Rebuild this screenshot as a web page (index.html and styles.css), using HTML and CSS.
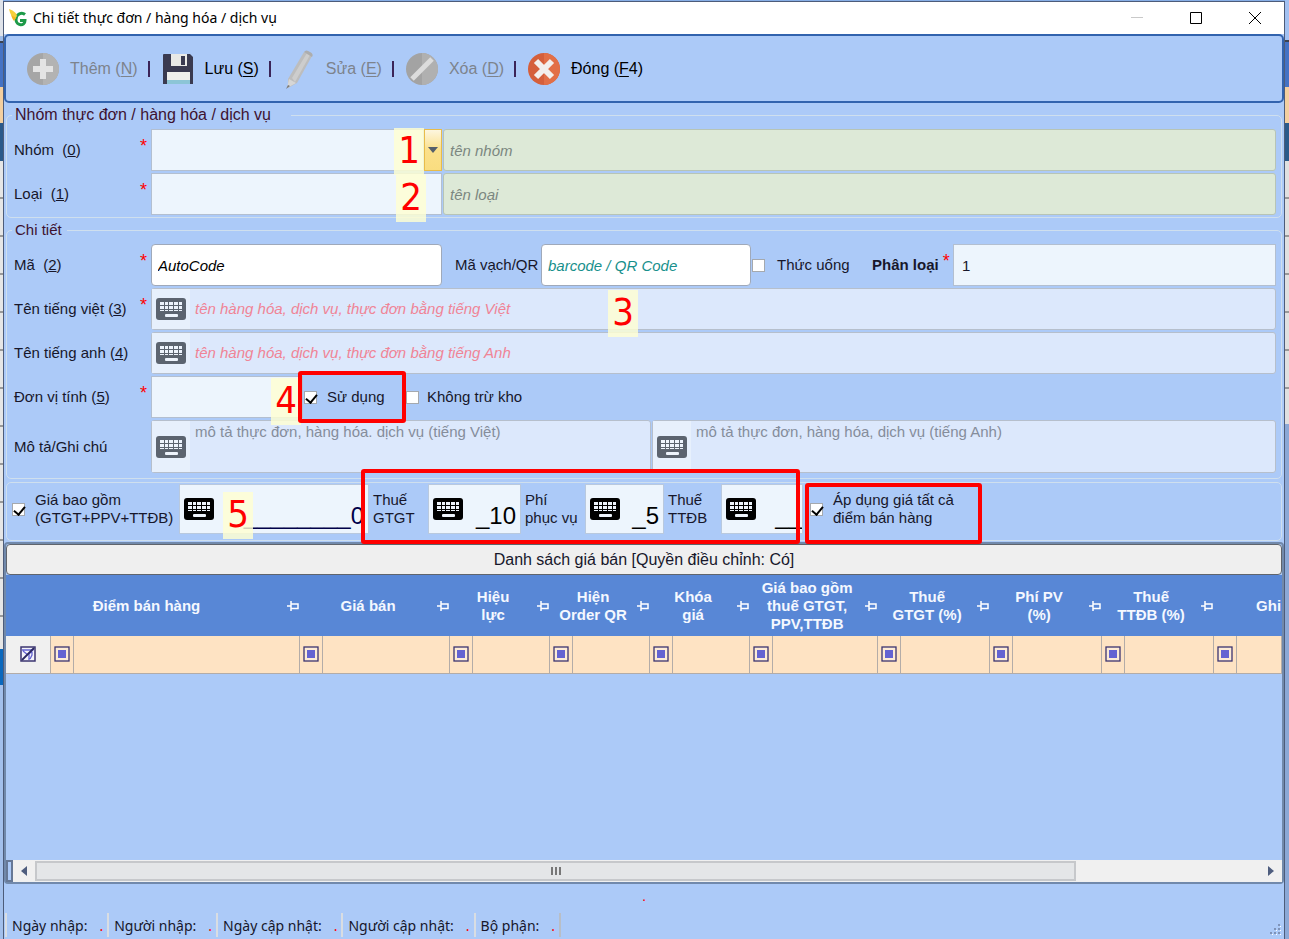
FILE: index.html
```html
<!DOCTYPE html>
<html lang="vi">
<head>
<meta charset="utf-8">
<title>Chi tiết thực đơn / hàng hóa / dịch vụ</title>
<meta name="viewport" content="width=device-width, initial-scale=1">
<link rel="stylesheet" href="styles.css">
</head>
<body class="desktop">
<svg class="defs" aria-hidden="true">
  <symbol id="kb" viewBox="0 0 32 24">
    <rect x="1" y="1" width="30" height="22" rx="3" fill="currentColor"/>
    <path d="M5 5h4v3h-4zM10 5h3v3h-3zM14 5h4v3h-4zM19 5h4v3h-4zM24 5h3v3h-3zM5 9h4v3h-4zM10 9h3v3h-3zM14 9h4v3h-4zM19 9h4v3h-4zM24 9h3v3h-3zM5 13h4v1h-4zM10 13h3v1h-3zM14 13h4v1h-4zM19 13h4v1h-4zM24 13h3v1h-3z" fill="#eef4fc"/>
    <rect x="10" y="17" width="13" height="3" rx="1" fill="#eef4fc"/>
  </symbol>
  <symbol id="pin" viewBox="0 0 12 10">
    <path d="M0 5h4M4 0v10M4 3h7v4.500h-7" fill="none" stroke="#fff" stroke-width="1.500"/>
  </symbol>
  <symbol id="flt" viewBox="0 0 16 16">
    <rect x="1" y="1" width="14" height="14" fill="#fdebd6" stroke="#3b3470" stroke-width="1.300"/>
    <rect x="4" y="4" width="8" height="8" fill="#6463d2"/>
  </symbol>
</svg>
<main class="window">
  <header class="titlebar">
    <svg class="app-icon" viewBox="0 0 18 18" aria-hidden="true">
      <path d="M16 5.500C13 3 7 4.500 7 10.500C7 17 16 17.500 16 11.500H11" fill="none" stroke="#1d9a48" stroke-width="3"/>
      <path d="M0 0C3 1 7 3 8 7L6 10C3 8 1 5 0 0Z" fill="#f7cf3b"/>
      <path d="M2 6L7 9L5 12C4 11 3 9 2 6Z" fill="#f3b61f"/>
    </svg>
    <h1 class="title">Chi tiết thực đơn / hàng hóa / dịch vụ</h1>
    <div class="caption-buttons">
      <button type="button" class="cap" disabled aria-label="Thu nhỏ"><svg viewBox="0 0 14 14"><path d="M1 6.500h12" stroke="#c9c9c9" fill="none"/></svg></button>
      <button type="button" class="cap" aria-label="Phóng to"><svg viewBox="0 0 14 14"><path d="M1.500 1.500h11v11h-11z" stroke="#000" fill="none"/></svg></button>
      <button type="button" class="cap" aria-label="Đóng cửa sổ"><svg viewBox="0 0 14 14"><path d="M1 1l12 12M13 1l-12 12" stroke="#000" fill="none"/></svg></button>
    </div>
  </header>

  <nav class="toolbar">
    <button type="button" class="tool" disabled>
      <svg viewBox="0 0 34 34" aria-hidden="true"><circle cx="17" cy="17" r="16" fill="#a6a6a6"/><path d="M17 1a16 16 0 0 1 0 32z" fill="#b3b3b3"/><path d="M14 7h6v7h7v6h-7v7h-6v-7h-7v-6h7z" fill="#e4e4e4"/></svg>
      <span>Thêm (<u>N</u>)</span></button>
    <span class="bar"></span>
    <button type="button" class="tool">
      <svg viewBox="0 0 34 34" aria-hidden="true"><path d="M2 3q0-1 1-1h26l3 3v27h-30z" fill="#3a3a50"/><path d="M10 2h16v12h-16z" fill="#e9e9e6"/><path d="M20 4h4v9h-4z" fill="#3a3a50"/><path d="M6 20h23v12h-23z" fill="#efefec"/><path d="M6 28h23v4h-23z" fill="#8cc5d6"/></svg>
      <span>Lưu (<u>S</u>)</span></button>
    <span class="bar"></span>
    <button type="button" class="tool" disabled>
      <svg class="pencil" viewBox="0 0 34 40" aria-hidden="true"><path d="M6 30L22 3l8 4-15 27-9 5z" fill="#bdbdbd"/><path d="M10 29L25 4l3 2-15 27z" fill="#cdcdcd"/><path d="M22 3q2-3 6 0q4 2 2 5z" fill="#adadad"/><path d="M7 30l7 4-9 5z" fill="#d6d6d6"/><path d="M6 36l2 1-4 3z" fill="#777"/></svg>
      <span>Sửa (<u>E</u>)</span></button>
    <span class="bar"></span>
    <button type="button" class="tool" disabled>
      <svg viewBox="0 0 34 34" aria-hidden="true"><circle cx="17" cy="17" r="16" fill="#a3a3a3"/><path d="M17 1a16 16 0 0 1 0 32z" fill="#b0b0b0"/><path d="M7 27L27 7" stroke="#dcdcdc" stroke-width="5"/></svg>
      <span>Xóa (<u>D</u>)</span></button>
    <span class="bar"></span>
    <button type="button" class="tool">
      <svg viewBox="0 0 34 34" aria-hidden="true"><circle cx="17" cy="17" r="16" fill="#d55f3b"/><path d="M17 1a16 16 0 0 1 0 32z" fill="#e26f47"/><path d="M9 9l16 16M25 9L9 25" stroke="#f3efec" stroke-width="6"/></svg>
      <span>Đóng (<u>F</u>4)</span></button>
  </nav>

  <form class="form">
    <fieldset class="group">
      <legend class="legend wide">Nhóm thực đơn / hàng hóa / dịch vụ</legend>
      <div class="row">
        <label class="label" for="nhom"><span>Nhóm &nbsp;(<u>0</u>)</span><b class="req">*</b></label>
        <div class="combo"><input id="nhom" class="box pale" type="text"><button type="button" class="drop" aria-label="Mở danh sách"><svg viewBox="0 0 10 6"><path d="M0 0h10L5 6z" fill="#555f6b"/></svg></button></div>
        <input class="box green grow" type="text" placeholder="tên nhóm" aria-label="Tên nhóm" readonly>
      </div>
      <div class="row">
        <label class="label" for="loai"><span>Loại &nbsp;(<u>1</u>)</span><b class="req">*</b></label>
        <div class="combo"><input id="loai" class="box pale" type="text"></div>
        <input class="box green grow" type="text" placeholder="tên loại" aria-label="Tên loại" readonly>
      </div>
    </fieldset>

    <fieldset class="group">
      <legend class="legend">Chi tiết</legend>
      <div class="row">
        <label class="label" for="ma"><span>Mã &nbsp;(<u>2</u>)</span><b class="req">*</b></label>
        <div class="combo"><input id="ma" class="box white code" type="text" value="AutoCode"></div>
        <label class="qr-label" for="qr">Mã vạch/QR</label>
        <input id="qr" class="box white barcode" type="text" placeholder="barcode / QR Code">
        <label class="check drink"><input type="checkbox" class="tick">Thức uống</label>
        <label class="kind" for="phanloai">Phân loại<b class="req">*</b></label>
        <input id="phanloai" class="box pale grow" type="text" value="1">
      </div>
      <div class="row">
        <label class="label" for="tenviet"><span>Tên tiếng việt (<u>3</u>)</span><b class="req">*</b></label>
        <div class="box soft grow keyed"><button type="button" class="key" aria-label="Bàn phím"><svg><use href="#kb"/></svg></button><input id="tenviet" class="plain pink" type="text" placeholder="tên hàng hóa, dịch vụ, thực đơn bằng tiếng Việt"></div>
      </div>
      <div class="row">
        <label class="label" for="tenanh"><span>Tên tiếng anh (<u>4</u>)</span></label>
        <div class="box soft grow keyed"><button type="button" class="key" aria-label="Bàn phím"><svg><use href="#kb"/></svg></button><input id="tenanh" class="plain pink" type="text" placeholder="tên hàng hóa, dịch vụ, thực đơn bằng tiếng Anh"></div>
      </div>
      <div class="row">
        <label class="label" for="donvi"><span>Đơn vị tính (<u>5</u>)</span><b class="req">*</b></label>
        <input id="donvi" class="box pale unit" type="text">
        <label class="check use"><input type="checkbox" class="tick" checked>Sử dụng</label>
        <label class="check stock"><input type="checkbox" class="tick">Không trừ kho</label>
      </div>
      <div class="row tall">
        <label class="label" for="motaviet"><span>Mô tả/Ghi chú</span></label>
        <div class="box soft keyed note-viet"><button type="button" class="key" aria-label="Bàn phím"><svg><use href="#kb"/></svg></button><textarea id="motaviet" class="plain" placeholder="mô tả thực đơn, hàng hóa. dịch vụ (tiếng Việt)"></textarea></div>
        <div class="box soft keyed grow"><button type="button" class="key" aria-label="Bàn phím"><svg><use href="#kb"/></svg></button><textarea class="plain" aria-label="Mô tả tiếng Anh" placeholder="mô tả thực đơn, hàng hóa, dịch vụ (tiếng Anh)"></textarea></div>
      </div>
    </fieldset>

    <div class="prices">
      <label class="check include"><input type="checkbox" class="tick" checked><span>Giá bao gồm<br>(GTGT+PPV+TTĐB)</span></label>
      <div class="amount price"><button type="button" class="key dark" aria-label="Bàn phím"><svg><use href="#kb"/></svg></button><input class="num" type="text" value="________0" aria-label="Giá"></div>
      <label class="tax t-gtgt" for="gtgt">Thuế<br>GTGT</label>
      <div class="amount a-gtgt"><button type="button" class="key dark" aria-label="Bàn phím"><svg><use href="#kb"/></svg></button><input id="gtgt" class="num" type="text" value="_10"></div>
      <label class="tax t-pv" for="pv">Phí<br>phục vụ</label>
      <div class="amount a-pv"><button type="button" class="key dark" aria-label="Bàn phím"><svg><use href="#kb"/></svg></button><input id="pv" class="num" type="text" value="_5"></div>
      <label class="tax t-ttdb" for="ttdb">Thuế<br>TTĐB</label>
      <div class="amount a-ttdb"><button type="button" class="key dark" aria-label="Bàn phím"><svg><use href="#kb"/></svg></button><input id="ttdb" class="num" type="text" value="__"></div>
      <label class="check apply"><input type="checkbox" class="tick" checked><span>Áp dụng giá tất cả<br>điểm bán hàng</span></label>
    </div>
  </form>

  <section class="list">
    <h2 class="list-title">Danh sách giá bán [Quyền điều chỉnh: Có]</h2>
    <div class="grid-wrap">
    <table class="grid">
      <colgroup><col class="c-mark"><col class="c-i"><col class="c-place"><col class="c-i"><col class="c-price"><col class="c-i"><col class="c-s"><col class="c-i"><col class="c-s"><col class="c-i"><col class="c-s"><col class="c-i"><col class="c-l"><col class="c-i"><col class="c-m"><col class="c-i"><col class="c-m"><col class="c-i"><col class="c-m"><col class="c-i"><col></colgroup>
      <thead><tr>
        <th colspan="3"><div class="th"><span>Điểm bán hàng</span><svg><use href="#pin"/></svg></div></th>
        <th colspan="2"><div class="th"><span>Giá bán</span><svg><use href="#pin"/></svg></div></th>
        <th colspan="2"><div class="th"><span>Hiệu<br>lực</span><svg><use href="#pin"/></svg></div></th>
        <th colspan="2"><div class="th"><span>Hiện<br>Order QR</span><svg><use href="#pin"/></svg></div></th>
        <th colspan="2"><div class="th"><span>Khóa<br>giá</span><svg><use href="#pin"/></svg></div></th>
        <th colspan="2"><div class="th"><span>Giá bao gồm<br>thuế GTGT,<br>PPV,TTĐB</span><svg><use href="#pin"/></svg></div></th>
        <th colspan="2"><div class="th"><span>Thuế<br>GTGT (%)</span><svg><use href="#pin"/></svg></div></th>
        <th colspan="2"><div class="th"><span>Phí PV<br>(%)</span><svg><use href="#pin"/></svg></div></th>
        <th colspan="2"><div class="th"><span>Thuế<br>TTĐB (%)</span><svg><use href="#pin"/></svg></div></th>
        <th colspan="2" class="last">Ghi</th>
      </tr></thead>
      <tbody><tr>
        <td class="mark"><svg viewBox="0 0 16 16"><rect x="1" y="1" width="14" height="14" fill="#f4f4fa" stroke="#3b3470" stroke-width="1.500"/><path d="M2 4h11L9 8v6M3 5l5 4M12 6v3l-2 4" fill="none" stroke="#6463d2" stroke-width="1.300"/><path d="M2 14L14 2" stroke="#2b2860" stroke-width="1.800"/></svg></td>
        <td><svg><use href="#flt"/></svg></td><td></td>
        <td><svg><use href="#flt"/></svg></td><td></td>
        <td><svg><use href="#flt"/></svg></td><td></td>
        <td><svg><use href="#flt"/></svg></td><td></td>
        <td><svg><use href="#flt"/></svg></td><td></td>
        <td><svg><use href="#flt"/></svg></td><td></td>
        <td><svg><use href="#flt"/></svg></td><td></td>
        <td><svg><use href="#flt"/></svg></td><td></td>
        <td><svg><use href="#flt"/></svg></td><td></td>
        <td><svg><use href="#flt"/></svg></td><td></td>
      </tr></tbody>
    </table>
    </div>
    <div class="scroll">
      <span class="split"></span>
      <button type="button" class="arrow" aria-label="Cuộn trái"><svg viewBox="0 0 6 10"><path d="M6 0v10L0 5z" fill="#4e5d7e"/></svg></button>
      <div class="track"><div class="thumb"><i></i><i></i><i></i></div></div>
      <button type="button" class="arrow" aria-label="Cuộn phải"><svg viewBox="0 0 6 10"><path d="M0 0v10L6 5z" fill="#4e5d7e"/></svg></button>
    </div>
  </section>

  <p class="message">.</p>
  <footer class="status">
    <div class="item">Ngày nhập:<b>.</b></div>
    <div class="item">Người nhập:<b>.</b></div>
    <div class="item">Ngày cập nhật:<b>.</b></div>
    <div class="item">Người cập nhật:<b>.</b></div>
    <div class="item">Bộ phận:<b>.</b></div>
    <svg class="grip" viewBox="0 0 14 14" aria-hidden="true"><path d="M10 1h2v2h-2zM6 5h2v2h-2zM10 5h2v2h-2zM2 9h2v2h-2zM6 9h2v2h-2zM10 9h2v2h-2z" fill="#7f93b8"/><path d="M12 3h1v1h-1zM8 7h1v1h-1zM12 7h1v1h-1zM4 11h1v1h-1zM8 11h1v1h-1zM12 11h1v1h-1z" fill="#fff"/></svg>
  </footer>

  <span class="step s1">1</span>
  <span class="step s2">2</span>
  <span class="step s3">3</span>
  <span class="step s4">4</span>
  <span class="step s5">5</span>
  <span class="frame f-use"></span>
  <span class="frame f-tax"></span>
  <span class="frame f-apply"></span>
</main>
</body>
</html>
```
FILE: styles.css
```css
* { box-sizing: border-box; }

.desktop {
  margin: 0;
  min-height: 100vh;
  display: flex;
  padding: 1px 4px 0 3px;
  font: 15px/18px "Liberation Sans", Arial, sans-serif;
  color: #17172b;
  background:
    linear-gradient(#dfe3ea 0 36px, #9dbbe8 36px 41px, #3c4350 41px 43px, #4472c4 43px 87px, #f3cfa0 87px 123px, #2b5a8a 123px 161px, transparent 161px) 0 0 / 3px 100% no-repeat,
    linear-gradient(transparent 649px, #0a68be 649px 685px, #a3c0ec 685px) 0 0 / 3px 100% no-repeat,
    repeating-linear-gradient(#e6e6e6 0 36px, #999 36px 38px) 0 161px / 3px 100% no-repeat,
    linear-gradient(#a2c1f2 0 40px, #3c4350 40px 42px, #4472c4 42px 87px, #f3cfa0 87px 123px, #2b5a8a 123px 161px, transparent 161px 424px, #8ba8d6 424px) 100% 0 / 4px 100% no-repeat,
    repeating-linear-gradient(#e0e0e0 0 36px, #999 36px 38px) 100% 161px / 4px 100% no-repeat,
    #86aee6;
}
.defs { position: absolute; width: 0; height: 0; }

.window {
  position: relative;
  flex: 1;
  min-width: 0;
  display: flex;
  flex-direction: column;
  border: 1px solid #4d5c7a;
  border-bottom: 0;
  background: #accaf8;
}
button, input, textarea { font: inherit; color: inherit; margin: 0; }
button { border: 0; padding: 0; background: none; }

.titlebar {
  height: 32px;
  display: flex;
  align-items: center;
  padding-left: 5px;
  background: #fff;
}
.app-icon { width: 18px; height: 18px; margin-right: 6px; }
.title { margin: 0; font: 14px/20px "Noto Sans", "Open Sans", sans-serif; color: #000; }
.caption-buttons { display: flex; margin-left: auto; }
.cap { width: 59px; height: 32px; }
.cap svg { width: 14px; height: 14px; display: block; margin: auto; }

.toolbar {
  height: 69px;
  display: flex;
  align-items: center;
  padding-left: 20px;
  font-size: 16px;
  border: 2px solid #3263ae;
  border-radius: 5px;
}
.tool { display: flex; align-items: center; gap: 10px; color: #000; }
.tool:disabled { color: #7d838c; }
.tool svg { width: 34px; height: 34px; }
.tool .pencil { height: 40px; }
.tool u { text-underline-offset: 2px; }
.bar { width: 2px; height: 16px; margin: 0 11px 0 10px; background: #3b2458; }

.group {
  min-width: 0;
  display: flex;
  flex-direction: column;
  gap: 2px;
  margin: 3px 2px 0;
  padding: 5px 5px 2px 7px;
  border: 1px solid #cfdfee;
  border-radius: 5px;
}
.group + .group { padding-bottom: 5px; }
.legend { margin-left: -2px; padding: 0 5px 0 3px; line-height: 18px; color: #3d1230; }
.wide { padding-right: 20px; font-size: 16px; }

.row { display: flex; align-items: stretch; gap: 1px; height: 42px; }
.tall { height: 53px; }
.label {
  width: 136px;
  flex: none;
  display: flex;
  align-items: center;
  justify-content: space-between;
  padding-right: 3px;
}
.req { align-self: flex-start; padding-top: 8px; font-weight: 400; font-size: 18px; color: #f00; }
.grow { flex: 1; min-width: 0; }
.box { border: 1px solid #b3bfd0; padding: 0 8px; height: 100%; width: 100%; outline: 0; }
.row > .box.grow { width: auto; }
.pale { background: #edf5fd; }
.green { background: #dde9d7; border-color: #b7c4b6; border-radius: 3px; font-style: italic; padding: 0 6px; }
.white { background: #fff; border-color: #9fa9ba; border-radius: 4px; font-style: italic; padding: 0 6px; }
.soft { background: #dce8fc; border-color: #b6bfcc; border-radius: 3px; }
.code { color: #000; }
.combo { width: 291px; flex: none; display: flex; }
.drop {
  width: 18px;
  flex: none;
  border: 1px solid #e8bc4a;
  background: linear-gradient(#fdf6df, #fbe08a 50%, #f9dd80);
}
.drop svg { width: 10px; height: 6px; display: block; margin: auto; }
::placeholder { color: #7b8780; opacity: 1; }
.barcode::placeholder { color: #17908c; }
.pink::placeholder { color: #f08496; }
textarea::placeholder { color: #858d9b; }

.qr-label { width: 97px; flex: none; align-self: center; padding-left: 12px; white-space: nowrap; }
.row > .barcode { width: 210px; flex: none; }
.check { display: flex; align-items: center; gap: 10px; white-space: nowrap; }
.tick {
  appearance: none;
  position: relative;
  width: 13px;
  height: 13px;
  flex: none;
  border: 1px solid #a5a9ae;
  background: #fff;
}
.tick:checked::after {
  content: "";
  position: absolute;
  left: 3px;
  top: 0;
  width: 5px;
  height: 9px;
  border: solid #000;
  border-width: 0 2px 2px 0;
  transform: rotate(40deg);
}
.drink { width: 119px; flex: none; gap: 12px; }
.kind { width: 80px; flex: none; display: flex; align-items: center; gap: 4px; font-weight: 700; }

.keyed { display: flex; padding: 0; }
.key { width: 38px; flex: none; background: #e7f0fc; color: #5c646f; }
.key svg { width: 32px; height: 24px; display: block; margin: auto; }
.plain { flex: 1; min-width: 0; border: 0; padding: 0 5px; background: none; outline: 0; resize: none; overflow: hidden; }
.pink { font-style: italic; }
.tall .plain { padding-top: 2px; }
.row > .unit { width: 152px; flex: none; }
.use { width: 101px; flex: none; }
.stock { gap: 8px; }
.row > .note-viet { width: 500px; flex: none; }

.prices {
  display: flex;
  align-items: flex-start;
  height: 59px;
  margin: 3px 2px 0;
  padding: 0 5px;
  border: 1px solid #cfdfee;
  border-radius: 5px;
}
.prices > label { padding-top: 8px; }
.include { width: 167px; flex: none; }
.amount { height: 50px; flex: none; display: flex; margin-top: 1px; border: 1px solid #b9c9de; background: #edf5fd; }
.dark { background: none; color: #000; }
.num { flex: 1; min-width: 0; width: 0; border: 0; padding: 14px 4px 0 0; background: none; outline: 0; text-align: right; font-size: 24px; color: #000; }
.price { width: 190px; }
.price .num { color: #00004a; }
.tax { flex: none; padding-left: 4px; white-space: nowrap; }
.t-gtgt { width: 59px; }
.a-gtgt { width: 93px; }
.t-pv { width: 64px; }
.a-pv { width: 79px; }
.t-ttdb { width: 57px; }
.a-ttdb { width: 82px; }
.a-ttdb .num { padding-right: 0; }
.apply { margin-left: 7px; }

.list {
  flex: 1;
  display: flex;
  flex-direction: column;
  margin: 1px 0 0;
  border: 2px solid #7189ab;
  border-radius: 4px;
}
.list-title {
  margin: 0;
  height: 31px;
  border: 1px solid #5f646c;
  border-radius: 4px;
  background: #efefef;
  font-size: 16px;
  font-weight: 400;
  line-height: 29px;
  text-align: center;
}
.grid-wrap { flex: 1; overflow: hidden; }
.grid { width: 100%; table-layout: fixed; border-collapse: collapse; }
.grid th { height: 61px; padding: 0; background: #5887d6; color: #f4f8ff; font-weight: 700; }
.th { display: flex; align-items: center; }
.th span { flex: 1; white-space: nowrap; }
.th svg { width: 12px; height: 10px; flex: none; }
.grid .last { text-align: left; padding-left: 43px; }
.grid td { height: 37px; padding: 0; border: 1px solid #b3aca8; border-top: 0; background: #fee3c3; }
.grid .mark { background: #f0f0f0; border-left: 0; }
.grid td svg { width: 16px; height: 16px; display: block; margin: auto; }
.c-mark { width: 44px; }
.c-i { width: 23px; }
.c-place { width: 226px; }
.c-price { width: 127px; }
.c-s { width: 77px; }
.c-l { width: 105px; }
.c-m { width: 89px; }

.scroll { display: flex; height: 22px; background: #f0f0f0; }
.split { width: 7px; border: 2px solid #667896; background: #accaf8; }
.arrow { width: 22px; }
.arrow svg { width: 6px; height: 10px; display: block; margin: auto; }
.track { flex: 1; padding: 1px 0; }
.thumb { width: 85%; height: 20px; display: flex; align-items: center; justify-content: center; gap: 2px; border: 2px solid #c6c8cb; background: #e4e6e8; }
.thumb i { width: 2px; height: 8px; background: #777; }

.message { margin: 0; height: 29px; line-height: 24px; text-align: center; color: #f00; }
.status {
  display: flex;
  height: 26px;
  padding: 0 2px 2px 1px;
  font: 14px/26px "Noto Sans", "Open Sans", sans-serif;
}
.item { display: flex; gap: 12px; padding: 0 4px 0 5px; border-left: 2px solid #d9dde2; white-space: nowrap; }
.item b { color: #f00; font-weight: 400; }
.item:nth-of-type(5) { border-right: 2px solid #b9bec6; }
.grip { width: 14px; height: 14px; margin-left: auto; align-self: flex-end; }

.step {
  position: absolute;
  width: 30px;
  height: 47px;
  background: rgba(255, 255, 210, 0.820);
  color: #f00;
  font: 38px/44px "DejaVu Sans Condensed", "DejaVu Sans", sans-serif;
  text-align: center;
}
.s1 { left: 390px; top: 126px; }
.s2 { left: 392px; top: 173px; }
.s3 { left: 604px; top: 288px; }
.s4 { left: 267px; top: 376px; }
.s5 { left: 219px; top: 490px; }
.frame { position: absolute; border: 4px solid #f00; border-radius: 3px; }
.f-use { left: 294px; top: 369px; width: 108px; height: 52px; }
.f-tax { left: 357px; top: 467px; width: 439px; height: 75px; }
.f-apply { left: 801px; top: 481px; width: 177px; height: 61px; }
```
